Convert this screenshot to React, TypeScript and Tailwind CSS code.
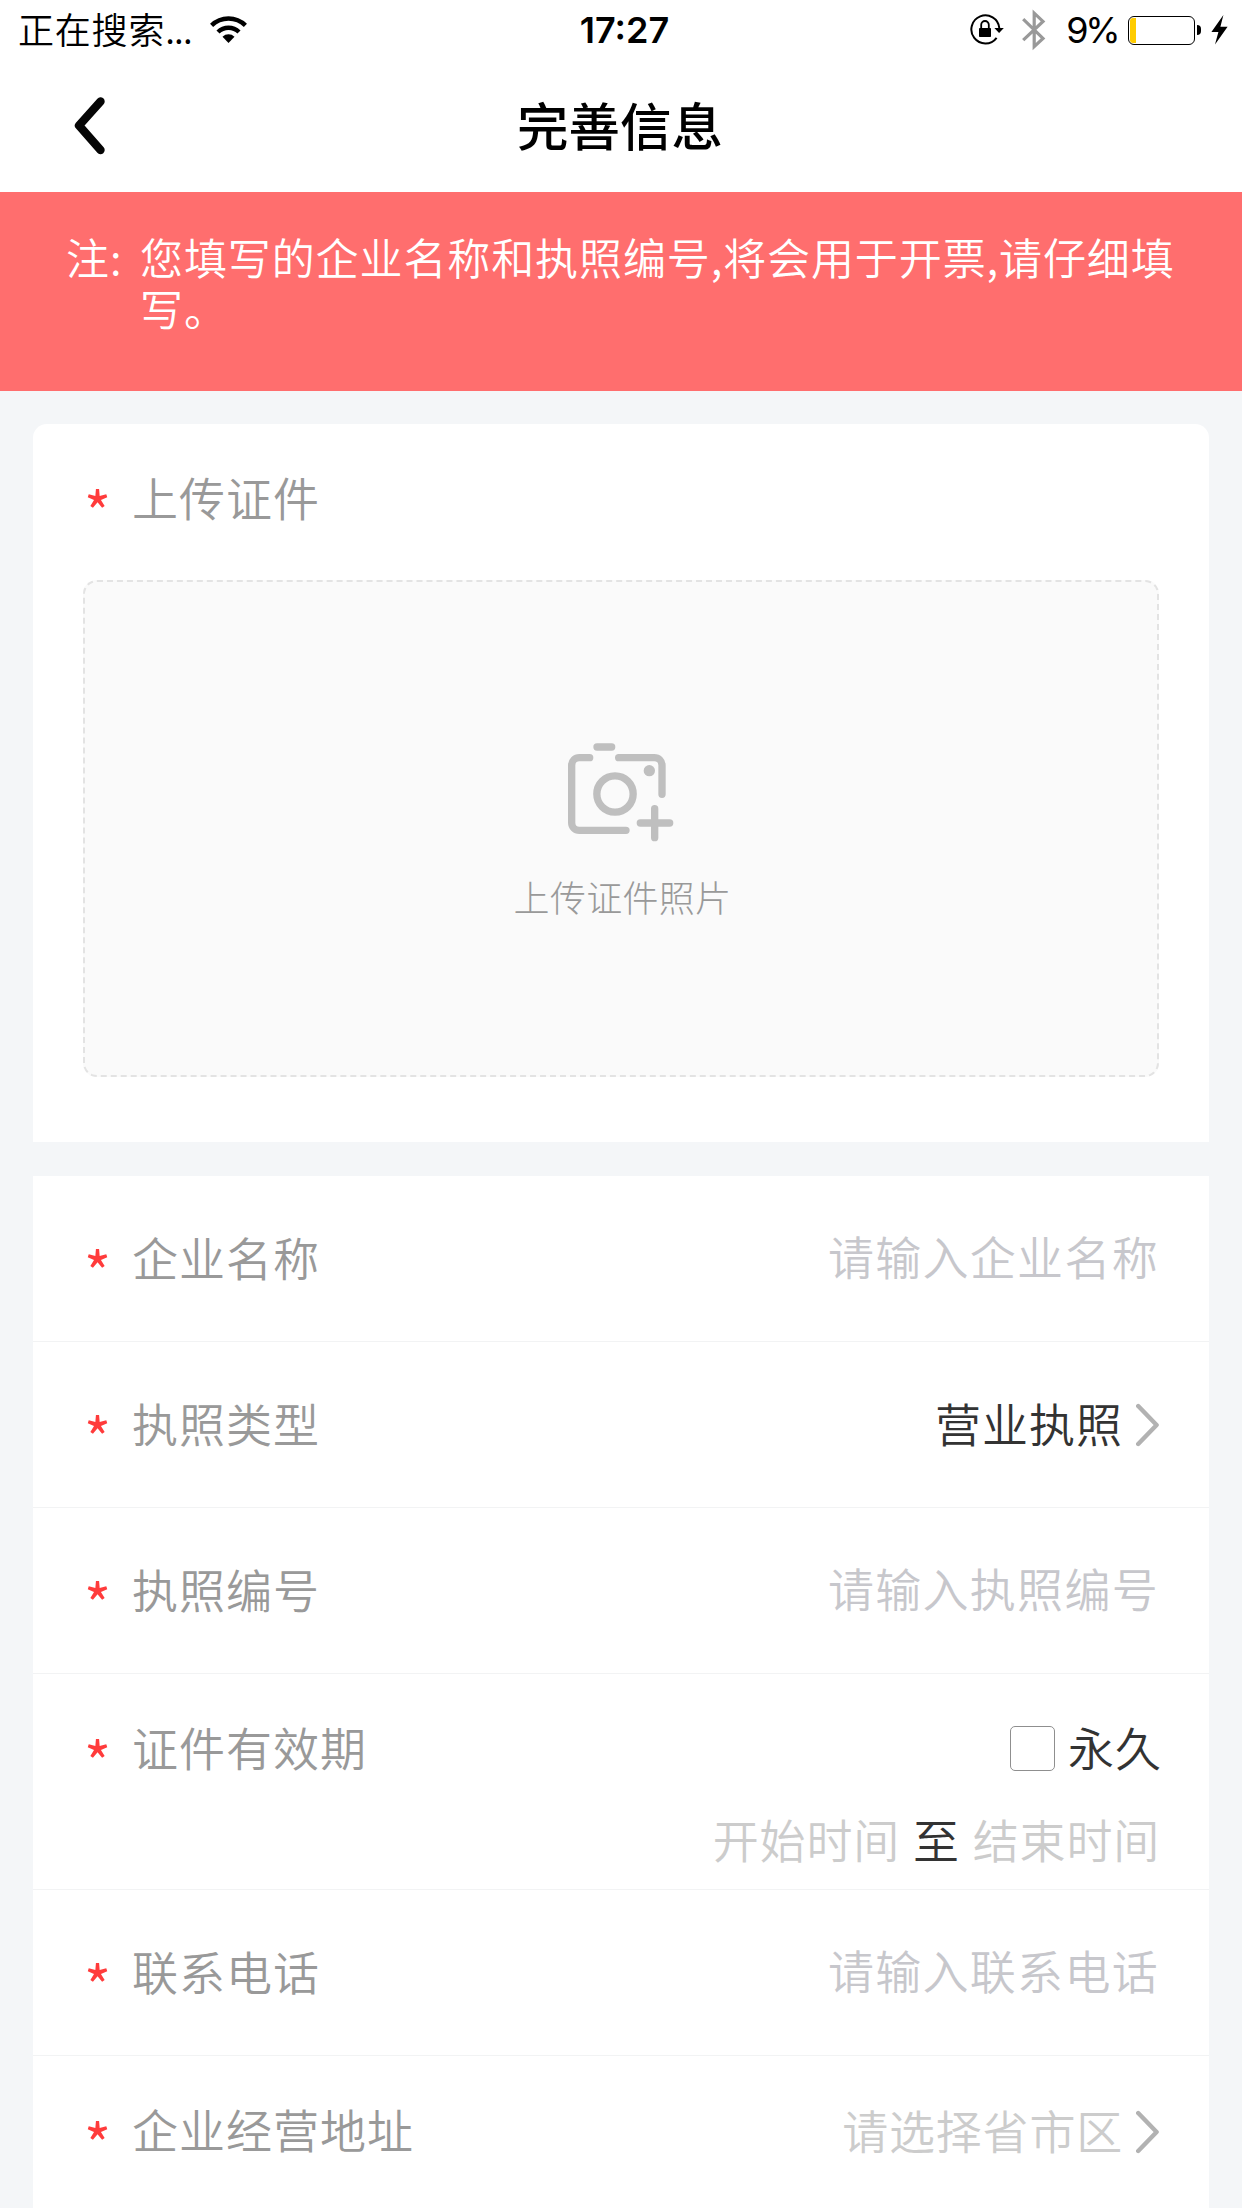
import React from "react";

interface LabelProps {
    text: string;
}

interface RowProps {
    label: string;
    placeholder?: string;
    children?: React.ReactNode;
}

const Wifi = () => (
    <svg width="37" height="28" viewBox="0 0 37 28" fill="none" stroke="#000" strokeWidth="4.4">
        <path d="M1.6 9.4a24 24 0 0 1 33.8 0" />
        <path d="M8 16a15 15 0 0 1 21 0" />
        <path d="M18.5 27l-6-6.2a8.6 8.6 0 0 1 12 0z" fill="#000" stroke="none" />
    </svg>
)

const RotationLock = () => (
    <svg width="35" height="32" viewBox="0 0 35 32" fill="none">
        <path d="M26.6 23.8A14 14 0 1 1 29.3 14" stroke="#000" strokeWidth="2" />
        <path d="M24.4 14h9.4l-4.7 5z" fill="#000" />
        <rect x="9" y="14" width="12" height="9" rx="0.8" fill="#000" />
        <path d="M11.2 14.5v-3.7a3.8 3.8 0 0 1 7.6 0v3.7" stroke="#000" strokeWidth="1.8" />
    </svg>
)

const Bluetooth = () => (
    <svg width="24" height="42" viewBox="0 0 24 42" fill="none" stroke="#999" strokeWidth="3.2">
        <path d="M1.2 10.2L21 29.4L12.2 37.6V4.2L21 12.4L1.2 31.2" />
    </svg>
)

const Battery = () => (
    <div className="flex items-center">
        <div className="h-[29px] w-[67px] rounded-[6px] border border-black p-px">
            <div className="h-full w-[6px] rounded-l-[3px] bg-[#ffcc00]"></div>
        </div>
        <div className="ml-[2px] h-[10px] w-[4px] rounded-r-full bg-black"></div>
    </div>
)

const Bolt = () => (
    <svg width="17" height="30" viewBox="0 0 17 30">
        <path d="M12.4 0L0.4 17h7L4 29.5L16.6 11.7H9.4z" fill="#000" />
    </svg>
)

const Camera = () => (
    <svg className="mr-[2px]" width="109" height="100" viewBox="200 125 327 300" fill="none" stroke="#bfbfbf" strokeWidth="22" strokeLinecap="round" strokeLinejoin="round">
        <path d="M271 172H240a23 23 0 0 0 -23 23V367a23 23 0 0 0 23 23H380" />
        <path d="M358 172H465a23 23 0 0 1 23 23V282" />
        <path d="M293 140H337M423 368H511M466 325V412" />
        <circle cx="347" cy="281" r="54.5" />
        <circle cx="450" cy="211" r="17" fill="#bfbfbf" stroke="none" />
    </svg>
)

const Arrow = () => (
    <svg className="mt-[5px] ml-[13px]" width="24" height="44" viewBox="0 0 24 44" fill="none" stroke="#b2b2b2" strokeWidth="4.4" strokeLinecap="round" strokeLinejoin="round">
        <path d="M2.2 3L20.6 22L2.2 41" />
    </svg>
)

const Label = ({ text }: LabelProps) => (
    <div className="flex h-[60px] items-start text-[46px] leading-[54px] tracking-[1px] text-[#999]">
        <span className="w-[48px] pt-[11px] text-[58px] font-normal leading-[60px] text-[#ff3b3b]">*</span>
        <span>{text}</span>
    </div>
)

const Row = ({ label, placeholder, children }: RowProps) => (
    <div className="flex h-[166px] items-center justify-between border-b border-[#f2f3f4] pr-[50px] pl-[51px]">
        <Label text={label} />
        {placeholder && (
            <span className="pb-[7px] text-[46px] leading-[60px] tracking-[1.3px] text-[#c7c7cc]">{placeholder}</span>
        )}
        {children}
    </div>
)

const StatusBar = () => (
    <div className="grid h-[60px] grid-cols-3 items-center pr-[14px] pl-[18px] text-[36px] leading-[60px]">
        <div className="flex items-center gap-[18px]">
            <span className="-mt-[4px] tracking-[0.8px]">正在搜索<span className="tracking-[-0.8px]">...</span></span>
            <Wifi />
        </div>
        <span className="pl-[3px] text-center font-['Inter',sans-serif] font-semibold">17:27</span>
        <div className="flex items-center justify-end">
            <RotationLock />
            <span className="ml-[17px]"><Bluetooth /></span>
            <span className="mr-[11px] ml-[20px] font-['Inter',sans-serif] font-normal tracking-[-3.5px]">9%</span>
            <Battery />
            <span className="ml-[10px]"><Bolt /></span>
        </div>
    </div>
)

const Header = () => (
    <header className="bg-white">
        <StatusBar />
        <div className="grid h-[132px] grid-cols-[200px_1fr_200px] items-center">
            <button className="pl-[73px]">
                <svg width="32" height="58" viewBox="0 0 32 58" fill="none" stroke="#050505" strokeWidth="8.4" strokeLinecap="round" strokeLinejoin="round">
                    <path d="M27.5 4.5L6 28.5L27.5 53" />
                </svg>
            </button>
            <h1 className="pr-[2px] pb-[4px] text-center text-[51.5px] font-medium leading-[72px]">完善信息</h1>
        </div>
    </header>
)

const Notice = () => (
    <div className="flex h-[199px] bg-[#ff6e6e] pt-[39px] pl-[66px] text-[43px] leading-[51px] tracking-[0.9px] text-white">
        <span className="w-[74px]">注:</span>
        <p className="w-[1050px]">您填写的企业名称和执照编号,将会用于开票,请仔细填写。</p>
    </div>
)

const Upload = () => (
    <section className="h-[718px] rounded-t-[14px] bg-white px-[50px] pt-[45px]">
        <div className="pl-px">
            <Label text="上传证件" />
        </div>
        <div className="mt-[51px] flex h-[497px] flex-col items-center rounded-[14px] border-2 border-dashed border-[#e3e3e3] bg-[#fafafa] pt-[160px]">
            <Camera />
            <span className="mt-[28px] pl-[3px] text-[36px] font-light leading-[52px] tracking-[0.3px] text-[#999]">上传证件照片</span>
        </div>
    </section>
)

const Validity = () => (
    <div className="h-[216px] border-b border-[#f2f3f4] pt-[45px] pr-[48px] pl-[51px]">
        <div className="flex items-start justify-between">
            <Label text="证件有效期" />
            <label className="-mr-px flex items-start text-[46px] leading-[54px] tracking-[1px] text-[#333]">
                <span className="mt-[7px] mr-[13px] h-[45px] w-[45px] rounded-[5px] border border-[#8f8f8f]"></span>
                永久
            </label>
        </div>
        <div className="mt-[30px] mr-px flex justify-end text-[46px] leading-[59px] tracking-[0.8px] text-[#ccc]">
            <span>开始时间</span>
            <span className="mx-[13px] text-[#333]">至</span>
            <span>结束时间</span>
        </div>
    </div>
)

export default function App() {
    return (
        <div className="h-[2208px] w-[1242px] overflow-hidden bg-[#f4f6f8] font-['Noto_Sans_CJK_SC',sans-serif] font-[350] text-black">
            <Header />
            <Notice />
            <main className="px-[33px] pt-[33px]">
                <Upload />
                <section className="mt-[34px] bg-white">
                    <Row label="企业名称" placeholder="请输入企业名称" />
                    <Row label="执照类型">
                        <div className="-mr-px flex items-center pb-[5px] text-[46px] leading-[60px] tracking-[1px] text-[#333]">
                            营业执照
                            <Arrow />
                        </div>
                    </Row>
                    <Row label="执照编号" placeholder="请输入执照编号" />
                    <Validity />
                    <Row label="联系电话" placeholder="请输入联系电话" />
                    <div className="flex h-[152px] items-start justify-between pt-[45px] pr-[49px] pl-[51px]">
                        <Label text="企业经营地址" />
                        <div className="flex items-center text-[46px] leading-[56px] tracking-[0.8px] text-[#ccc]">
                            请选择省市区
                            <Arrow />
                        </div>
                    </div>
                </section>
            </main>
        </div>
    )
}
